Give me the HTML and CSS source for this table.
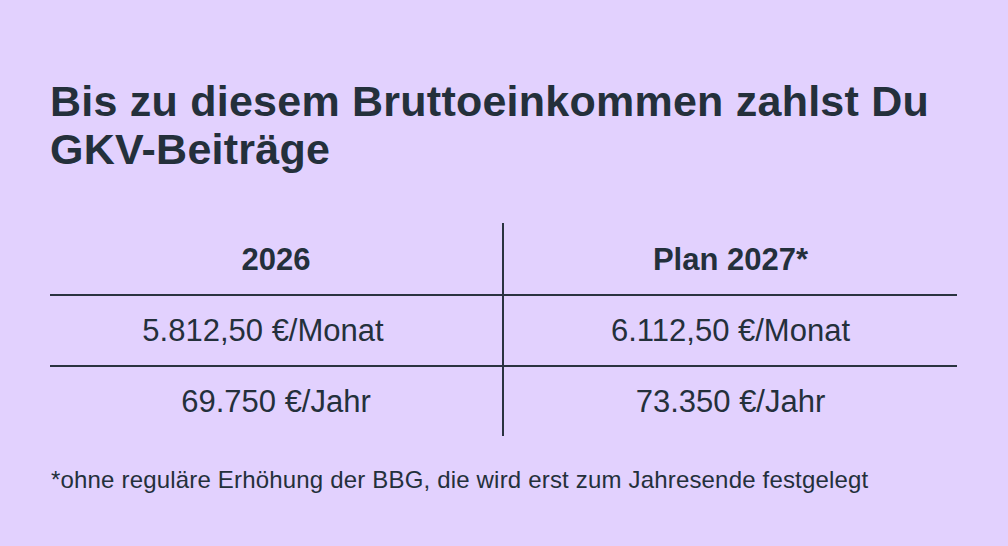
FILE: index.html
```html
<!DOCTYPE html>
<html lang="de">
<head>
<meta charset="utf-8">
<title>GKV-Beiträge</title>
<link rel="stylesheet" href="styles.css">
</head>
<body>
<main class="card">
  <h1 class="title">Bis zu diesem Bruttoeinkommen zahlst Du GKV-Beiträge</h1>
  <div class="table">
    <div class="cell head left">2026</div>
    <div class="cell head">Plan 2027*</div>
    <div class="cell left offset">5.812,50 €/Monat</div>
    <div class="cell">6.112,50 €/Monat</div>
    <div class="cell left last">69.750 €/Jahr</div>
    <div class="cell last">73.350 €/Jahr</div>
  </div>
  <p class="note">*ohne reguläre Erhöhung der BBG, die wird erst zum Jahresende festgelegt</p>
</main>
</body>
</html>
```
FILE: styles.css
```css
html, body {
  margin: 0;
  padding: 0;
}
body {
  background: #e2d1fe;
  color: #24303b;
  font-family: "Liberation Sans", Arial, sans-serif;
  width: 1008px;
  height: 546px;
  overflow: hidden;
}
.card {
  padding: 77px 0 0 50px;
  width: 907px;
}
.title {
  margin: 0;
  font-size: 43px;
  line-height: 48px;
  font-weight: 700;
  letter-spacing: 0.24px;
  width: 900px;
}
.table {
  margin-top: 50px;
  display: grid;
  grid-template-columns: 454px 453px;
  grid-template-rows: 73px 71px 69px;
}
.cell {
  display: flex;
  align-items: center;
  justify-content: center;
  font-size: 31px;
  border-bottom: 2px solid #2a3340;
  padding-top: 1px;
}
.cell.head {
  font-weight: 700;
  padding-top: 2px;
}
.cell.left {
  border-right: 2px solid #2a3340;
}
.cell.offset {
  padding-right: 26px;
}
.cell.last {
  border-bottom: none;
}
.note {
  margin: 30px 0 0 1px;
  font-size: 24px;
  line-height: 28px;
  letter-spacing: 0.18px;
}
```
